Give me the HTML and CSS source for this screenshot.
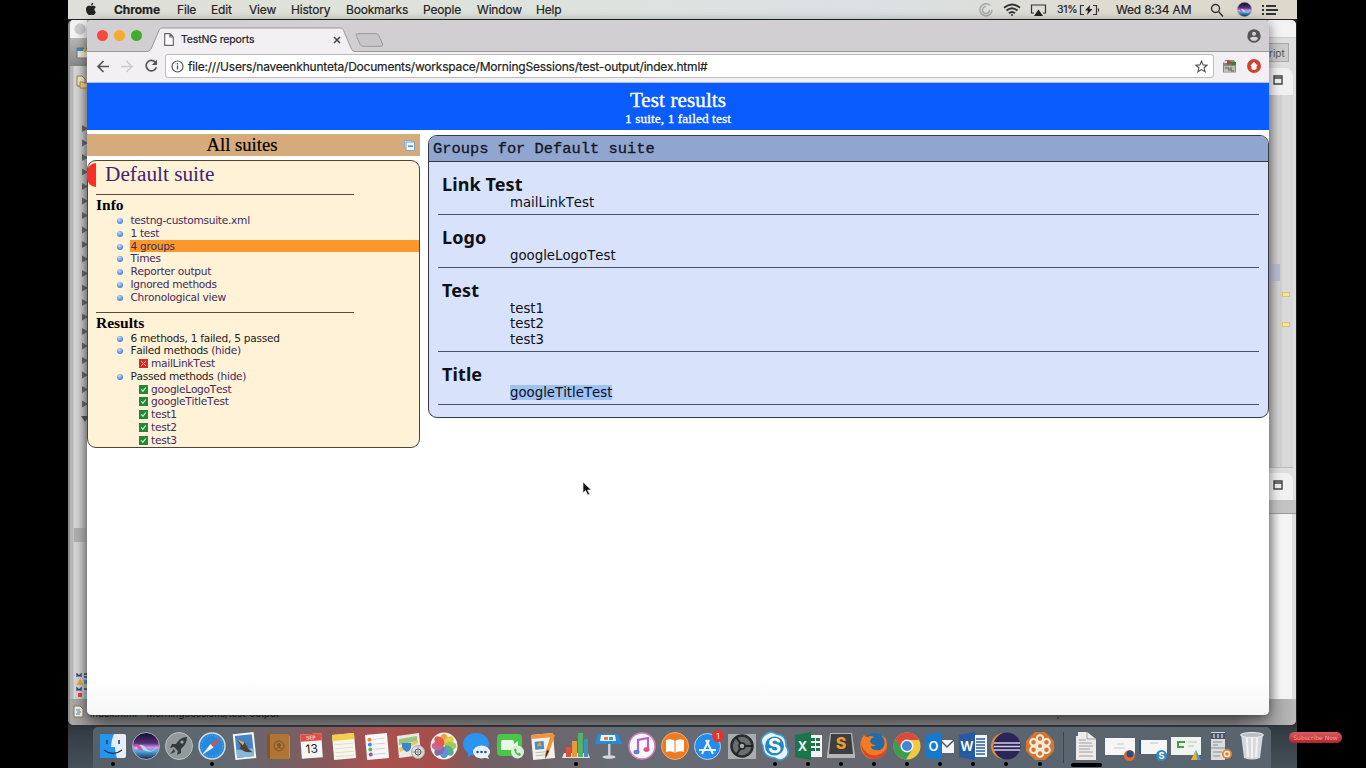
FILE: index.html
```html
<!DOCTYPE html>
<html lang="en">
<head>
<meta charset="utf-8">
<title>TestNG reports</title>
<link rel="stylesheet" href="styles.css">
</head>
<body>
<div class="desktop">
  <header class="menubar">
    <nav class="menus">
      <svg class="apple" viewBox="0 0 14 14"><path d="M9.3 0.8C8 .9 6.9 2 7.1 3.4 8.4 3.4 9.4 2.100 9.300.8ZM11.9 9.900c-1.700-.7-2-3.700-.1-4.700C10.600 3.500 8.900 3.600 7.300 4.200 5.600 3.500 3.700 3.500 2.600 5 1.200 7.300 2.400 11 4.400 12.800c1 .7 1.700 0 2.900 0s1.800.7 2.800 0c.8-.8 1.400-1.800 1.800-2.900Z"/></svg>
      <b>Chrome</b><span>File</span><span>Edit</span><span>View</span><span>History</span><span>Bookmarks</span><span>People</span><span>Window</span><span>Help</span>
    </nav>
    <div class="status">
      <svg width="14" height="14" viewBox="0 0 14 14" fill="none" stroke="#aaa" stroke-width="1.600"><path d="M11 2.300A6 6 0 1 0 13 7M7 3.500A3.500 3.500 0 1 0 10.500 7"/></svg>
      <svg width="18" height="14" viewBox="0 0 18 14" fill="none" stroke="#333" stroke-width="1.900"><path d="M1 4.800Q9-1.800 17 4.800M3.500 7.500Q9 2.800 14.500 7.500M6 10.200Q9 7.600 12 10.200"/><circle cx="9" cy="12" r="1" fill="#333" stroke="none"/></svg>
      <svg width="17" height="14" viewBox="0 0 17 14"><path d="M4 10H1.500V2h14v8H13" fill="none" stroke="#333" stroke-width="1.200"/><path d="M8.500 6.500 13 13H4Z" fill="#222"/></svg>
      <span class="pct">31%</span>
      <svg width="21" height="12" viewBox="0 0 21 12"><path d="M5 1.500H1.500v9H5M14 1.500h3.500v9H14M19.500 4.500v3" fill="none" stroke="#333" stroke-width="1.200"/><path d="m11 1-5 5.500h3L8 11l5.500-6h-3Z" fill="#222"/></svg>
      <span>Wed 8:34 AM</span>
      <svg width="14" height="14" viewBox="0 0 14 14" fill="none" stroke="#333" stroke-width="1.400"><circle cx="5.500" cy="5.500" r="4"/><path d="m8.500 8.500 4.500 5"/></svg>
      <svg width="15" height="15" viewBox="0 0 28 28"><use href="#siri"/></svg>
      <svg width="16" height="12" viewBox="0 0 16 12" stroke="#333" stroke-width="1.800"><path d="M0 2h2M4 2h10M0 6h2M4 6h12M0 10h2M4 10h10"/></svg>
    </div>
  </header>

  <section class="ide">
    <div class="ide-left">
      <i class="ghost-light"></i><i class="ide-tool"></i>
      <svg class="ide-i1" viewBox="0 0 12 14"><path d="M1 2h11v10H1z" fill="#e8e4d5" stroke="#777"/><path d="M1 2h11v3H1z" fill="#4384bd"/><path d="M9 1v5M7 4h5" stroke="#d9ae34" stroke-width="2"/></svg>
      <svg class="ide-i2" viewBox="0 0 12 14"><path d="M1 1h5l3 3v7H1z" fill="#e9e5d6" stroke="#967d50"/><path d="M4 7h3l1 1h4v5H4z" fill="#ead192" stroke="#b38229"/></svg>
      <svg class="tree" viewBox="0 0 8 310"><defs><path id="tri" d="M1 0 7 3.500 1 7Z" fill="#666"/></defs>
        <use href="#tri" y="5"/><use href="#tri" y="19.500"/><use href="#tri" y="34"/><use href="#tri" y="48.500"/><use href="#tri" y="63"/><use href="#tri" y="77.500"/><use href="#tri" y="92"/><use href="#tri" y="106.500"/><use href="#tri" y="121"/><use href="#tri" y="135.500"/><use href="#tri" y="150"/><use href="#tri" y="164.500"/><use href="#tri" y="179"/><use href="#tri" y="193.500"/><use href="#tri" y="208"/><use href="#tri" y="222.500"/><use href="#tri" y="237"/><use href="#tri" y="251.500"/><use href="#tri" y="266"/><use href="#tri" y="280.500"/><path d="M0 296h8l-4 6Z" fill="#555"/></svg>
      <i class="tree-row"></i>
      <svg class="ide-i3" viewBox="0 0 12 26"><path d="M1 4V1l2 2 2-2v3M8 1h4M8 4h4" stroke="#334774" fill="none" stroke-width="1.300"/><path d="M4 6l3.500 6h-7z" fill="#e6a526"/><path d="M8 7h4v4H8z" fill="#5a83c5"/><path d="M1 18v-3l2 2 2-2v3M8 16h4" stroke="#334774" fill="none" stroke-width="1.300"/><path d="M2 20h4v4H2z" fill="#d74545"/><path d="M8 20h4v4H8z" fill="#a5b9d5"/></svg>
    </div>
    <div class="ide-right">
      <div class="ide-cap"></div>
      <div class="ide-persp"><span>ript</span></div>
      <div class="ide-tab"><svg width="10" height="10" viewBox="0 0 10 10"><path d="M1 1h8v8H1zM1 3h8" fill="none" stroke="#444" stroke-width="1.400"/></svg></div>
      <div class="ide-edit"><i class="cur"></i><i class="warn w1"></i><i class="warn w2"></i></div>
      <div class="ide-tab low"><svg width="10" height="10" viewBox="0 0 10 10"><path d="M1 1h8v8H1zM1 3h8" fill="none" stroke="#444" stroke-width="1.400"/></svg></div>
      <div class="ide-bar"></div>
      <div class="ide-cons"></div>
    </div>
    <div class="ide-status"><svg width="11" height="13" viewBox="0 0 11 13"><path d="M1 1h6l3 3v8H1z" fill="#eee" stroke="#86754f"/><path d="M3 5h4M4 7h4M3 9h4" stroke="#5685a0"/></svg><span>index.html - MorningSessions/test-output</span><i></i></div>
  </section>

  <main class="browser">
    <div class="tabstrip">
      <div class="lights"><i class="red"></i><i class="yellow"></i><i class="green"></i></div>
      <div class="tab">
        <svg class="tab-shape" viewBox="0 0 208 25"><path d="M0 24.500C3 24 3.500 23 4.500 21L12 3.500C13 1.500 13.500 1 15.500 1H193C195 1 195.600 1.500 196.500 3.500L204 21C205 23.500 206 24.500 208 24.500V25H0Z" fill="#f2f0f2"/><path d="M0 24.500C3 24 3.500 23 4.500 21L12 3.500C13 1.500 13.500 1 15.500 1H193C195 1 195.600 1.500 196.500 3.500L204 21C205 23.500 206 24.500 208 24.500" fill="none" stroke="#999"/></svg>
        <svg class="page" width="10" height="13" viewBox="0 0 10 13"><path d="M.7.700H6l3.300 3.300v8.300H.7ZM6 .7V4h3.300" fill="#fff" stroke="#666" stroke-width="1.200"/></svg>
        <span>TestNG reports</span>
        <svg class="close" width="8" height="8" viewBox="0 0 8 8"><path d="m1 1 6 6M7 1 1 7" stroke="#444" stroke-width="1.500"/></svg>
      </div>
      <svg class="newtab" width="29" height="14" viewBox="0 0 29 14"><path d="M2.500.7H21Q23 .7 23.800 2.500L27.500 11Q28 13.300 26 13.300H8Q6 13.300 5.200 11.500L1.200 2.500Q.6.700 2.500.700Z" fill="#c8c7c8" stroke="#999"/></svg>
      <svg class="user" width="14" height="14" viewBox="0 0 14 14"><circle cx="7" cy="7" r="6.700" fill="#555"/><circle cx="7" cy="4.800" r="2" fill="#d3d1d3"/><path d="M3 9.800Q3 7.800 7 7.800T11 9.800Q9.500 12 7 12T3 9.800Z" fill="#d3d1d3"/></svg>
    </div>
    <div class="toolbar">
      <svg width="14" height="13" viewBox="0 0 14 13" fill="none" stroke="#555" stroke-width="1.700"><path d="M13 6.500H2M7.500 1 2 6.500 7.500 12"/></svg>
      <svg width="14" height="13" viewBox="0 0 14 13" fill="none" stroke="#ccc" stroke-width="1.700"><path d="M1 6.500h11M6.500 1 12 6.500 6.500 12"/></svg>
      <svg width="14" height="14" viewBox="0 0 14 14"><path d="M11.500 3.500A5.200 5.200 0 1 0 12.300 8.200" fill="none" stroke="#555" stroke-width="1.700"/><path d="M13 .8V6H7.800Z" fill="#555"/></svg>
      <div class="omnibox">
        <svg width="13" height="13" viewBox="0 0 13 13"><circle cx="6.500" cy="6.500" r="5.500" fill="none" stroke="#555" stroke-width="1.200"/><path d="M6.500 5.500v4M6.500 3v1.400" stroke="#555" stroke-width="1.400"/></svg>
        <span>file:///Users/naveenkhunteta/Documents/workspace/MorningSessions/test-output/index.html#</span>
        <svg class="star" width="13" height="13" viewBox="0 0 13 13"><path d="m6.500 1.200 1.600 3.700 4 .3-3 2.600.9 3.900-3.500-2.100L3 11.700l.9-3.900-3-2.600 4-.3Z" fill="none" stroke="#555" stroke-width="1.200"/></svg>
      </div>
      <svg width="15" height="15" viewBox="0 0 15 15"><path d="M1 4 3 1h9l2 4v8.500H1z" fill="#858b83"/><path d="M2 7h11v6H2z" fill="#bdbdb5"/><path d="M3 9h4v3M9 8v4h3" stroke="#555" fill="none"/><circle cx="6.500" cy="3.500" r="2.300" fill="#c93639"/><path d="M8 3h6v3H9z" fill="#397c3e"/><path d="M2 2h3v2H2z" fill="#ddd"/></svg>
      <svg width="14" height="14" viewBox="0 0 14 14"><circle cx="7" cy="7" r="7" fill="#d3412c"/><path d="M7 2.700 10.500 6.500 9.500 7.500V10Q7 12 4.500 10V7.500L3.500 6.500Z" fill="#fff"/></svg>
    </div>

    <div class="report">
      <div class="banner"><div class="b1">Test results</div><div class="b2">1 suite, 1 failed test</div></div>
      <div class="cols">
        <aside class="nav">
          <div class="all">All suites<svg width="11" height="11" viewBox="0 0 11 11"><rect x=".5" y=".5" width="7" height="7" fill="#dceafa" stroke="#8caed0"/><rect x="2" y="2" width="8.500" height="8.500" fill="#f5faff" stroke="#7fa5cd"/><path d="M4 6.200h5" stroke="#386fae" stroke-width="1.200"/></svg></div>
          <div class="suite">
            <div class="suite-name"><i></i><a>Default suite</a></div>
            <section class="sec">
              <h3>Info</h3>
              <ul>
                <li><a>testng-customsuite.xml</a></li><li><a>1 test</a></li><li class="on"><a>4 groups</a></li><li><a>Times</a></li><li><a>Reporter output</a></li><li><a>Ignored methods</a></li><li><a>Chronological view</a></li>
              </ul>
            </section>
            <section class="sec second">
              <h3>Results</h3>
              <ul>
                <li>6 methods, 1 failed, 5 passed</li>
                <li>Failed methods <a>(hide)</a></li>
                <li class="m"><svg viewBox="0 0 9 9"><rect width="9" height="9" fill="#d92b24"/><path d="m2 2 5 5M7 2 2 7" stroke="#ffb5a8"/></svg><a>mailLinkTest</a></li>
                <li>Passed methods <a>(hide)</a></li>
                <li class="m"><svg viewBox="0 0 9 9"><g id="ok"><rect width="9" height="9" fill="#278539"/><path d="m2.300 4.400 1.600 1.800L6.800 2.500" stroke="#c5f7c8" fill="none" stroke-width="1.200"/></g></svg><a>googleLogoTest</a></li>
                <li class="m"><svg viewBox="0 0 9 9"><use href="#ok"/></svg><a>googleTitleTest</a></li>
                <li class="m"><svg viewBox="0 0 9 9"><use href="#ok"/></svg><a>test1</a></li>
                <li class="m"><svg viewBox="0 0 9 9"><use href="#ok"/></svg><a>test2</a></li>
                <li class="m"><svg viewBox="0 0 9 9"><use href="#ok"/></svg><a>test3</a></li>
              </ul>
            </section>
          </div>
        </aside>
        <section class="panel">
          <div class="panel-head">Groups for Default suite</div>
          <div class="groups">
            <div class="group"><h2>Link Test</h2><p>mailLinkTest</p></div>
            <div class="group"><h2>Logo</h2><p>googleLogoTest</p></div>
            <div class="group"><h2>Test</h2><p>test1</p><p>test2</p><p>test3</p></div>
            <div class="group"><h2>Title</h2><p><mark>googleTitleTest</mark></p></div>
          </div>
        </section>
      </div>
    </div>
  </main>

  <svg class="pointer" width="11" height="16" viewBox="0 0 11 16"><path d="M1 1v11l2.600-2.400L5.600 14l2-1-2-4H9.300Z" fill="#111" stroke="#ddd" stroke-width=".8"/></svg>

  <footer class="dock">
    <div class="app run"><svg viewBox="0 0 28 28"><rect x="1" y="2" width="26" height="24" rx="2" fill="#e8eef5"/><path d="M1 2h14q-3 6-3 13h4q0 6 2 11H1z" fill="#2594ef"/><path d="M8 8v4M20 8v4" stroke="#163a5f" stroke-width="1.500"/><path d="M5 18q9 7 18 0" fill="none" stroke="#163a5f" stroke-width="1.300"/></svg></div>
    <div class="app"><svg viewBox="0 0 28 28"><defs><linearGradient id="sg" x2="0" y2="1"><stop offset="0" stop-color="#0d0c25"/><stop offset=".4" stop-color="#563178"/><stop offset=".55" stop-color="#d78de0"/><stop offset=".7" stop-color="#4ba9dc"/><stop offset="1" stop-color="#16214d"/></linearGradient></defs><g id="siri"><circle cx="14" cy="14" r="13.500" fill="url(#sg)" stroke="#a9aabd"/><path d="M2 17q7-8 12-1t12-3q-4 9-12 6T2 17Z" fill="#b4eafb" opacity=".8"/><path d="M3 12q5 0 8 6-4 2-8-6Z" fill="#e64aa2"/></g></svg></div>
    <div class="app"><svg viewBox="0 0 28 28"><circle cx="14" cy="14" r="13.500" fill="#929a9e" stroke="#bdc1c3"/><path d="M22 5q-7 0-11 7H7l-2 4 4-1 4 4-1 4 4-2v-4q6-5 6-12ZM9 17l-4 5 5-2Z" fill="#353a3e"/><circle cx="17" cy="10" r="1.600" fill="#a5abae"/></svg></div>
    <div class="app run"><svg viewBox="0 0 28 28"><circle cx="14" cy="14" r="13" fill="#2589df" stroke="#d5dadd" stroke-width="1.500"/><circle cx="14" cy="14" r="10.500" fill="none" stroke="#8fd0fa" stroke-dasharray=".6 2"/><path d="m24 5-8.500 10.500L12.500 12Z" fill="#e74d3c"/><path d="m4 23 8.500-11 3 3.500Z" fill="#f0f0ef"/></svg></div>
    <div class="app"><svg viewBox="0 0 28 28"><g transform="rotate(-6 14 14)"><path d="M3 1h21v26H3z" fill="#f4f5f5"/><path d="M5 3h17v22H5z" fill="#4385c8"/><path d="M5 17h17v8H5z" fill="#86b9dc"/><path d="m7 7 7 3 3 7 4 4-7-1-6-4 2-2Z" fill="#534130"/><path d="m7 7 5 6 2-3Z" fill="#d1ac76"/></g></svg></div>
    <div class="app"><svg viewBox="0 0 28 28"><path d="M23 4h3v22h-3z" fill="#82ac73"/><path d="M3 2h20q2 0 2 2v23H5q-2 0-2-2z" fill="#ad7636"/><path d="M3 2h3v25q-3 0-3-2z" fill="#875622"/><circle cx="15" cy="14" r="5" fill="none" stroke="#825524"/><circle cx="15" cy="13" r="2" fill="#825524"/><path d="M11.500 17q3.500-3 7 0" fill="none" stroke="#825524"/></svg></div>
    <div class="app"><svg viewBox="0 0 28 28"><g transform="rotate(-4 14 14)"><path d="M4 2h21v24H4z" fill="#f6f6f5"/><path d="M4 2h21v7H4z" fill="#e44d43"/><text x="14.500" y="7.500" class="t6">SEP</text><text x="14.500" y="21" class="t13">13</text></g></svg></div>
    <div class="app"><svg viewBox="0 0 28 28"><g transform="rotate(-5 14 14)"><path d="M3 2h22v25H3z" fill="#f8f6ea"/><path d="M3 2h22v6H3z" fill="#f4ce46"/><path d="M5 12h18M5 16h18M5 20h18M5 24h18" stroke="#dddcd0"/></g></svg></div>
    <div class="app"><svg viewBox="0 0 28 28"><g transform="rotate(-5 14 14)"><path d="M3 2h22v25H3z" fill="#f7f7f8"/><path d="M10 7h12M10 12h12M10 17h12M10 22h12" stroke="#d1d1d4"/><g><circle cx="7" cy="7" r="2" fill="#f3852f"/><circle cx="7" cy="12" r="2" fill="#358be0"/><circle cx="7" cy="17" r="2" fill="#57b94d"/><circle cx="7" cy="22" r="2" fill="#a74ab2"/></g></g></svg></div>
    <div class="app"><svg viewBox="0 0 28 28"><path d="m1 4 22-3 2 22-22 3z" fill="#e9eadf"/><path d="m3 7 18-3v5L3 13z" fill="#9bc484"/><path d="m3 16 19-8v3L4 20z" fill="#f1c659"/><path d="M6 11h9v5q-1 3-4.500 4Q7 18 6 15Z" fill="#3f85cd"/><circle cx="22" cy="20" r="6.500" fill="#ddd" stroke="#aaa"/><circle cx="22" cy="20" r="3" fill="none" stroke="#555"/><path d="M22 14.500V25M16.500 20H27" stroke="#777" stroke-width=".6"/></svg></div>
    <div class="app"><svg viewBox="0 0 28 28"><circle cx="14" cy="14" r="13.500" fill="#f0efed"/><g opacity=".9"><ellipse cx="14" cy="7.500" rx="4.200" ry="5.800" fill="#f29b2f"/><ellipse cx="14" cy="7.500" rx="4.200" ry="5.800" fill="#e4cc34" transform="rotate(45 14 14)"/><ellipse cx="14" cy="7.500" rx="4.200" ry="5.800" fill="#9bc548" transform="rotate(90 14 14)"/><ellipse cx="14" cy="7.500" rx="4.200" ry="5.800" fill="#43a687" transform="rotate(135 14 14)"/><ellipse cx="14" cy="7.500" rx="4.200" ry="5.800" fill="#4b8dd0" transform="rotate(180 14 14)"/><ellipse cx="14" cy="7.500" rx="4.200" ry="5.800" fill="#735dab" transform="rotate(225 14 14)"/><ellipse cx="14" cy="7.500" rx="4.200" ry="5.800" fill="#c05995" transform="rotate(270 14 14)"/><ellipse cx="14" cy="7.500" rx="4.200" ry="5.800" fill="#df4a3d" transform="rotate(315 14 14)"/></g></svg></div>
    <div class="app"><svg viewBox="0 0 28 28"><ellipse cx="13" cy="12" rx="13" ry="11" fill="#2a94ef"/><path d="M5 18v7l7-4Z" fill="#2a94ef"/><ellipse cx="18.500" cy="20" rx="8.500" ry="6.500" fill="#e8f4fc"/><path d="m24 22 2 5-6-2Z" fill="#e8f4fc"/><g fill="#36516d"><circle cx="14.500" cy="20" r="1.300"/><circle cx="18.500" cy="20" r="1.300"/><circle cx="22.500" cy="20" r="1.300"/></g></svg></div>
    <div class="app"><svg viewBox="0 0 28 28"><rect x="1" y="2" width="25" height="22" rx="4" fill="#47c647"/><rect x="5" y="8" width="13" height="10" rx="1.500" fill="#e8f7e7"/><path d="m18 12 4-3v8l-4-3z" fill="#e8f7e7"/><circle cx="21.500" cy="20" r="6.500" fill="#dceddb"/><path d="M18 17q1 6 6 7l1-2-2-1.500-1 1-2-2 1-1-1.500-2Z" fill="#49bd49"/></svg></div>
    <div class="app"><svg viewBox="0 0 28 28"><g transform="rotate(-5 14 14)"><path d="M3 2h22v25H3z" fill="#f3f0e9"/><path d="M3 2h22v4H3z" fill="#f0953b"/><path d="M6 9h9v8H6z" fill="#428ec6"/><path d="M8 14q3-8 5 0z" fill="#e49b48"/><path d="M6 20h13M6 23h10" stroke="#bbb"/></g><path d="m22 2 4 1-7 20-3 4v-5Z" fill="#ed962f"/><path d="m18 18 2 1-4 8z" fill="#222"/></svg></div>
    <div class="app run"><svg viewBox="0 0 28 28"><path d="m2 21-2 5h28l-2-5z" fill="#e4e3e1"/><path d="M4 15h5v10H4z" fill="#d9503d"/><path d="M10 9h5v16h-5z" fill="#e79b36"/><path d="M16 1h5v24h-5z" fill="#54b268"/><path d="M22 7h4v18h-4z" fill="#438ebd"/></svg></div>
    <div class="app"><svg viewBox="0 0 28 28"><path d="M3 2h20l4 10H0z" fill="#268bdc"/><path d="M6 3h14l1 6H5z" fill="#e7f2f9"/><path d="M9 5h4v3H9z" fill="#ec7d4b"/><path d="M14 5h4v3h-4z" fill="#49a788"/><path d="M13 12h2.500v12H13z" fill="#c7cdd1"/><ellipse cx="14" cy="25" rx="6.500" ry="1.800" fill="#d4d7d9"/></svg></div>
    <div class="app"><svg viewBox="0 0 28 28"><circle cx="14" cy="14" r="13" fill="#f8f8fa" stroke="#db7ec1" stroke-width="1.500"/><path d="M10 20V8l10-2v11" fill="none" stroke="#b162ce" stroke-width="2.200"/><ellipse cx="8.500" cy="20" rx="3" ry="2.300" fill="#627fe0"/><ellipse cx="18.500" cy="17.500" rx="3" ry="2.300" fill="#e54b87"/></svg></div>
    <div class="app"><svg viewBox="0 0 28 28"><circle cx="14" cy="14" r="13.500" fill="#f07a20" stroke="#f8a86a"/><path d="M14 9q-4-3-9-1v12q5-2 9 1 4-3 9-1V8q-5-2-9 1Z" fill="#fff"/><path d="M14 9v12" stroke="#e7772a"/></svg></div>
    <div class="app"><svg viewBox="0 0 28 28"><circle cx="13.500" cy="14.500" r="13" fill="#258cea" stroke="#b6d5ef"/><path d="m8 22 7-14M19 22 12 8M5 18h17" stroke="#eaf5fd" stroke-width="2" fill="none"/><circle cx="24" cy="4" r="6" fill="#ea302f"/><text x="24" y="7" class="t7">1</text></svg></div>
    <div class="app"><svg viewBox="0 0 28 28"><path d="M0 2h28v25H0z" fill="#a9adaf"/><circle cx="14" cy="14" r="10.500" fill="#6a6e70" stroke="#292b2c" stroke-width="2.500"/><circle cx="14" cy="14" r="3" fill="#aaa" stroke="#222" stroke-width="1.500"/><path d="M17 14h8M12.500 11.500 8 5M12.500 16.500 8 23" stroke="#202224" stroke-width="2"/></svg></div>
    <div class="app run"><svg viewBox="0 0 28 28"><path d="M7 1q4-2 8 1 11 1 10 12 5 7-1 12-5 4-10 0Q2 25 2 14-3 6 7 1Z" fill="#e9f2f7" stroke="#3f9bd1" stroke-width="1.500"/><circle cx="13.500" cy="14" r="9.500" fill="#2387c3"/><text x="13.500" y="21" class="skype">S</text></svg></div>
    <div class="app run"><svg viewBox="0 0 28 28"><path d="M14 3h14v22H14z" fill="#f2f4f2"/><path d="M17 6h4v3h-4zm5 0h4v3h-4zm-5 5h4v3h-4zm5 0h4v3h-4zm-5 5h4v3h-4zm5 0h4v3h-4z" fill="#247147"/><path d="m1 3 16-3v28L1 25z" fill="#19754a"/><text x="8.500" y="19" class="office">X</text></svg></div>
    <div class="app run"><svg viewBox="0 0 28 28"><path d="M3 1h22l3 22v3H0v-3z" fill="#b5b5b4"/><path d="M4 2h20l2 20H2z" fill="#3c3e3f"/><text x="14" y="17" class="sub">S</text></svg></div>
    <div class="app run"><svg viewBox="0 0 28 28"><circle cx="15" cy="13" r="12" fill="#236ba7"/><path d="M4 3Q-1 9 1 18q4 10 14 9 12-2 12-14Q27 5 21 3q5 5 3 11-2 5-8 4-5 0-5-4 3 1 5-1-5 0-6-4 1-3 4-4-4-2-6 0Q5 5 4 3Z" fill="#ef7c25"/><path d="M1 13q6 12 16 10 8-2 10-8-1 11-12 12Q3 27 1 13Z" fill="#dc4626"/></svg></div>
    <div class="app run"><svg viewBox="0 0 28 28"><circle cx="14" cy="14" r="13.500" fill="#f4c93d"/><path d="M2.300 7A13.500 13.500 0 0 1 26 8H14L8 17Z" fill="#dc4a3d"/><path d="M2.300 7A13.500 13.500 0 0 0 13 27.500L19 18H9Z" fill="#3a9d52"/><circle cx="14" cy="14" r="6.500" fill="#f3f3f1"/><circle cx="14" cy="14" r="5" fill="#4284dc"/></svg></div>
    <div class="app run"><svg viewBox="0 0 28 28"><path d="M14 8h14v13H14z" fill="#f3f5f7"/><path d="m15 9 6 6 7-7" fill="none" stroke="#555" stroke-width="1.500"/><path d="m0 3 16-3v28L0 25z" fill="#1479d0"/><text x="7.500" y="19" class="office">O</text></svg></div>
    <div class="app run"><svg viewBox="0 0 28 28"><path d="M14 3h14v22H14z" fill="#f3f4f6"/><path d="M17 7h9M17 10h9M17 13h9M17 16h9M17 19h9M17 22h9" stroke="#355e9d" stroke-width="1.300"/><path d="m0 3 16-3v28L0 25z" fill="#2859a5"/><text x="8" y="19" class="office">W</text></svg></div>
    <div class="app run"><svg viewBox="0 0 28 28"><circle cx="12" cy="14" r="13" fill="#df8c37"/><circle cx="15" cy="14" r="13.500" fill="#2c2557"/><path d="M2 11h26M2 14.500h26M2 18h26" stroke="#d2cee6" stroke-width="1.400"/></svg></div>
    <div class="app run"><svg viewBox="0 0 28 28"><path d="M9 0h10l9 9v10l-9 9H9l-9-9V9Z" fill="#d5762b"/><g fill="none" stroke="#f8ede1" stroke-width="2"><circle cx="14" cy="14" r="3"/><circle cx="14" cy="6.500" r="3.300"/><circle cx="20.500" cy="10.200" r="3.300"/><circle cx="20.500" cy="17.800" r="3.300"/><circle cx="14" cy="21.500" r="3.300"/><circle cx="7.500" cy="17.800" r="3.300"/><circle cx="7.500" cy="10.200" r="3.300"/></g></svg></div>
    <i class="sep"></i>
    <div class="app wide-run"><svg viewBox="0 0 28 28"><path d="M5 0h9l9 7v21H3V4h2z" fill="#ecebe9"/><path d="M14 0v7h9M6 8h7M6 11h13M6 14h14M6 17h11M6 20h14M6 24h14" stroke="#a0a0a0" fill="none"/></svg></div>
    <div class="app"><svg viewBox="0 0 28 28"><path d="M-1 6h30v17H-1z" fill="#f6f6f6"/><path d="M11 12h7M8 16h11" stroke="#c3c8d2"/><circle cx="23.500" cy="23.500" r="5.500" fill="#e96a28"/><circle cx="24" cy="22" r="3.500" fill="#2a4d8b"/></svg></div>
    <div class="app"><svg viewBox="0 0 28 28"><path d="M0 8h28v14H0z" fill="#f4f6f8"/><path d="M0 8h2v14H0z" fill="#304f99"/><path d="M11 11h8" stroke="#c0c0c8"/><circle cx="22.500" cy="23.500" r="5.500" fill="#3687c0"/><text x="22.500" y="27" class="mini">S</text></svg></div>
    <div class="app"><svg viewBox="0 0 28 28"><path d="M-1 5h30v18H-1z" fill="#f0f4ee"/><path d="M5 10h8M6 10v5h6" stroke="#4b9d4b" stroke-width="2" fill="none"/><path d="M16 10h9M16 14h6" stroke="#b9c8ae"/><path d="m24 18 5 10H19z" fill="#4f99d1"/><path d="m24 18 1 10h-6z" fill="#e7b034"/></svg></div>
    <div class="app"><svg viewBox="0 0 28 28"><path d="M6 0h14v28H6z" fill="#dadcdd"/><path d="M6 1h14v6H6z" fill="#495367"/><path d="M9 2v4M13 2v4M17 2v4" stroke="#fff"/><path d="M8 10h9M8 13h5M6 16h14M8 20h9M8 24h7" stroke="#8b9197"/><circle cx="22" cy="22" r="5" fill="#d68743"/><circle cx="22" cy="22" r="2.500" fill="none" stroke="#f9e5ca" stroke-width="1.500"/></svg></div>
    <div class="app"><svg viewBox="0 0 28 28"><path d="m3 2 3 24q8 3 16 0l3-24z" fill="#d5d8dc"/><path d="m9 5 1 20M14 5v21M19 5l-1 20" stroke="#f1f3f5" stroke-width="2"/><ellipse cx="14" cy="3" rx="11.500" ry="2.500" fill="#b9bec4" stroke="#eef0f2"/></svg></div>
  </footer>
</div>
<div class="subscribe">Subscribe Now</div>
</body>
</html>
```
FILE: styles.css
```css
* { box-sizing: border-box; }
body { margin: 0; width: 1366px; height: 768px; overflow: hidden; background: #000; position: relative; font-family: Inter, "Liberation Sans", sans-serif; }
svg { display: block; flex: none; }
i { display: block; }
h2, h3, p, ul { margin: 0; padding: 0; }
.desktop { position: relative; width: 1229px; height: 768px; margin-left: 68px; background: linear-gradient(#222 0 715px, #333b42 730px, #46515a); overflow: hidden; }

.menubar { height: 19px; display: flex; justify-content: space-between; background: linear-gradient(90deg, #dedfd8 0, #dfe2d9 20%, #dce3df 45%, #dbe1e4 65%, #dedbd0 85%, #dcd7ca); color: #222; font-size: 12px; line-height: 19px; white-space: nowrap; -webkit-text-stroke: .2px #222; }
.menus { display: grid; grid-template-columns: 30px 63px 34px 38px 42px 55px 77px 54px 59px 40px; padding-left: 16px; letter-spacing: -.18px; }
.menus b { letter-spacing: -.05px; }
.apple { width: 14px; height: 14px; margin-top: 2px; fill: #222; }
.status { display: grid; grid-template-columns: 24px 27px 27px 22px 37px 94px 27px 25px 35px; align-items: center; letter-spacing: -.2px; }
.pct { font-size: 10.5px; letter-spacing: -.3px; }

.ide { position: absolute; left: 0; top: 20px; width: 1228px; height: 705px; background: #bfbfc0; border-radius: 5px; border-left: 2px solid #8e8e8e; overflow: hidden; }
.ide-left { position: absolute; left: 0; top: 0; width: 17px; height: 680px; background: linear-gradient(90deg, #b5b5b5 0 3px, #d6d6d6 4px, #cfcfd0 9px, #b1b1b1); }
.ghost-light { width: 17px; height: 18px; background: radial-gradient(circle at 10px 9px, #ccc 0 5px, #f3f3f3 6px); }
.ide-tool { width: 17px; height: 28px; background: linear-gradient(#b7b7b7, #868686); }
.ide-i1 { position: absolute; left: 6px; top: 26px; width: 12px; }
.ide-i2 { position: absolute; left: 6px; top: 55px; width: 12px; }
.tree { position: absolute; left: 11px; top: 100px; width: 8px; height: 310px; }
.tree-row { position: absolute; left: 4px; top: 508px; width: 13px; height: 14px; background: #acacac; }
.ide-i3 { position: absolute; left: 6px; top: 653px; width: 12px; }
.ide-right { position: absolute; right: 0; top: 0; width: 28px; height: 680px; background: #dedede; }
.ide-cap { height: 18px; background: #f3f3f3; border-bottom: 1px solid #ccc; }
.ide-persp { height: 30px; padding-top: 5px; }
.ide-persp span { display: block; width: 21px; height: 19px; border: 1px solid #aaa; border-left: 0; background: #cbcbcb; color: #555; font-size: 10px; line-height: 18px; padding-left: 1px; }
.ide-tab { width: 25px; height: 27px; background: #f1f1f1; border-radius: 0 8px 0 0; padding: 7px 0 0 5px; }
.ide-edit { position: relative; width: 25px; height: 373px; background: linear-gradient(90deg, #b7b7b7, #d6d6d6 12px, #c5c5c5 13px, #d9d9d9 14px); border-bottom: 1px solid #bbb; margin-bottom: 5px; }
.cur { position: absolute; left: 0; top: 169px; width: 12px; height: 17px; background: #b6bccd; }
.warn { position: absolute; left: 14px; width: 8px; height: 5px; border: 1px solid #dcc75b; background: #efe4a2; }
.w1 { top: 197px; } .w2 { top: 227px; }
.ide-bar { height: 14px; background: #c3c3c3; border-bottom: 1px solid #999; }
.ide-cons { width: 24px; height: 186px; background: linear-gradient(90deg, #c7c7c7, #f4f4f4 12px); }
.ide-status { position: absolute; left: 0; right: 0; bottom: 0; height: 26px; padding: 6px 0 0 3px; display: flex; gap: 6px; background: linear-gradient(90deg, #aaa 0, #777 3%, #777 95%, #bbb); font-size: 9.6px; line-height: 17px; color: #222; white-space: nowrap; }
.ide-status i { width: 2px; height: 14px; border-left: 2px dotted #555; margin-left: 772px; }

.browser { position: absolute; left: 19px; top: 20px; width: 1182px; height: 695px; display: flex; flex-direction: column; background: #fff; border-radius: 5px; overflow: hidden; box-shadow: 0 3px 12px rgba(0,0,0,.55); }
.tabstrip { height: 32px; flex: none; display: flex; background: #d1cfd1; border-bottom: 1px solid #999; padding: 7px 8px 0 10px; }
.lights { display: flex; gap: 6px; padding-top: 3px; width: 50px; }
.lights i { width: 11px; height: 11px; border-radius: 50%; }
.red { background: #f4493e; } .yellow { background: #f8aa2c; } .green { background: #43ab2d; }
.tab { position: relative; width: 208px; height: 25px; display: flex; align-items: center; padding-left: 17px; font-size: 10.5px; color: #222; }
.tab-shape { position: absolute; left: 0; top: 0; width: 208px; height: 25px; }
.tab span, .page, .close { position: relative; }
.tab span { margin-left: 7px; width: 152px; letter-spacing: -.15px; -webkit-text-stroke: .2px #222; }
.newtab { margin-top: 6px; }
.user { margin: 2px 0 0 auto; }
.toolbar { height: 31px; flex: none; display: flex; align-items: center; padding: 0 8px 2px 9px; gap: 10px; background: #f2f0f2; border-bottom: 1px solid #b9bccc; }
.omnibox { width: 1049px; height: 24px; margin-left: -3px; margin-right: -2px; border: 1px solid #bbb; border-radius: 3px; background: #fff; display: flex; align-items: center; padding: 0 5px; gap: 4px; font-size: 12px; letter-spacing: -.205px; color: #222; white-space: nowrap; -webkit-text-stroke: .2px #222; }
.star { margin-left: auto; }

.report { flex: 1; font-family: "Liberation Serif", serif; background: linear-gradient(#fff 94%, #f6f6f6); }
.banner { height: 47px; padding-top: 6px; background: #0a5cff; color: #fff; text-align: center; }
.b1 { font-size: 21px; line-height: 22px; height: 23px; letter-spacing: .12px; -webkit-text-stroke: .4px #fff; }
.b2 { font-size: 13.3px; line-height: 14px; letter-spacing: .1px; -webkit-text-stroke: .3px #fff; }
.cols { display: flex; align-items: flex-start; gap: 8px; padding-top: 4px; }
.banner + .cols { height: 320px; }
.nav { width: 333px; }
.all { position: relative; height: 22px; background: #d5ab7c; text-align: center; font-size: 18.7px; line-height: 22px; padding-right: 23px; color: #000; -webkit-text-stroke: .2px #000; }
.all svg { position: absolute; right: 5px; top: 6px; }
.suite { margin-top: 4px; height: 288px; border: 1px solid #4d4434; border-radius: 9px; background: #fff2d7; }
.suite-name { height: 33px; display: flex; padding-top: 2px; font-size: 21.3px; line-height: 23px; color: #3e2470; }
.suite-name i { width: 9px; height: 24px; margin-left: -1px; background: #fb2e24; border-radius: 9px 0 0 9px; }
.suite-name a { margin-left: 9px; }
.sec { padding-left: 8px; }
.sec::before { content: ""; display: block; width: 258px; height: 1px; background: #554c3e; }
.sec h3 { font-size: 15.5px; line-height: 20px; height: 19px; }
.second { margin-top: 8px; }
.nav ul { list-style: none; font-family: "DejaVu Sans", sans-serif; font-size: 10.6px; line-height: 13px; letter-spacing: -.27px; font-kerning: none; color: #1d1a1c; }
.nav li { position: relative; height: 12.8px; margin-left: 34.4px; white-space: nowrap; }
.nav li::before { content: ""; position: absolute; left: -13px; top: 4px; width: 6px; height: 6px; border-radius: 50%; background: radial-gradient(circle at 40% 30%, #c4daff, #4c80e2 70%); }
.nav li a { color: #412a5e; }
.nav li.on { background: #fb982c; }
.nav li.m { display: flex; align-items: center; gap: 3px; margin-left: 43px; }
.nav li.m::before { display: none; }
.nav li.m svg { width: 9px; height: 9px; }
.panel { width: 841px; height: 283px; margin-top: 1px; border: 1px solid #343a48; border-radius: 9px; background: #d8e2fb; overflow: hidden; }
.panel-head { height: 26px; background: #90a5d0; border-bottom: 1px solid #343a48; font: 15.4px/27px "Liberation Mono", monospace; padding-left: 4px; color: #121722; -webkit-text-stroke: .3px #121722; }
.groups { padding: 0 9px; }
.group { border-bottom: 1px solid #4b5362; padding: 12px 0 3.7px 4px; font-family: "DejaVu Sans", sans-serif; color: #0d1017; }
.group h2 { font: bold 18px/20px "Noto Sans", sans-serif; height: 21px; letter-spacing: .1px; }
.group p { font-size: 13.3px; line-height: 15.3px; padding-left: 68px; font-kerning: none; }
.group mark { background: #9dc2f3; color: inherit; }
.pointer { position: absolute; left: 514px; top: 481px; }

.dock { position: absolute; left: 25px; top: 727px; width: 1178px; height: 41px; display: flex; padding: 5px 0 0 3px; border-radius: 5px 5px 0 0; background: linear-gradient(90deg, #566069 0, #626970 12%, #86595a 20%, #a95250 24%, #a44f4c 29%, #735f63 33%, #666c75 45%, #686870 60%, #5b6570 75%, #59646f); }
.app { width: 33.12px; height: 36px; flex: none; position: relative; padding: 0 2.5px; }
.app svg { width: 28px; height: 28px; overflow: visible; }
.run::after { content: ""; position: absolute; left: 14.5px; top: 30px; width: 4px; height: 4px; border-radius: 50%; background: #000; }
.wide-run::after { content: ""; position: absolute; left: 1px; top: 31px; width: 31px; height: 4px; border-radius: 2px; background: #000; }
.sep { width: 1px; height: 31px; margin: 0 6px 0 7px; background: #3c444b; }
.dock text { font-family: Inter, sans-serif; text-anchor: middle; }
.t6 { font-size: 5px; fill: #fff; } .t7 { font-size: 8px; fill: #fff; } .t13 { font-size: 12px; fill: #222; }
.skype { font-size: 20px; font-weight: bold; fill: #fff; } .office { font-size: 13px; font-weight: 600; fill: #fff; }
.sub { font-size: 16px; font-weight: 800; fill: #f09a31; } .mini { font-size: 9px; font-weight: bold; fill: #fff; }
.subscribe { position: absolute; left: 1289px; top: 732px; width: 53px; height: 11px; border-radius: 6px; background: linear-gradient(#dc5b62, #b4232d); color: #f1a6a6; text-align: center; font: 6px/11px "DejaVu Sans", sans-serif; white-space: nowrap; }
```
